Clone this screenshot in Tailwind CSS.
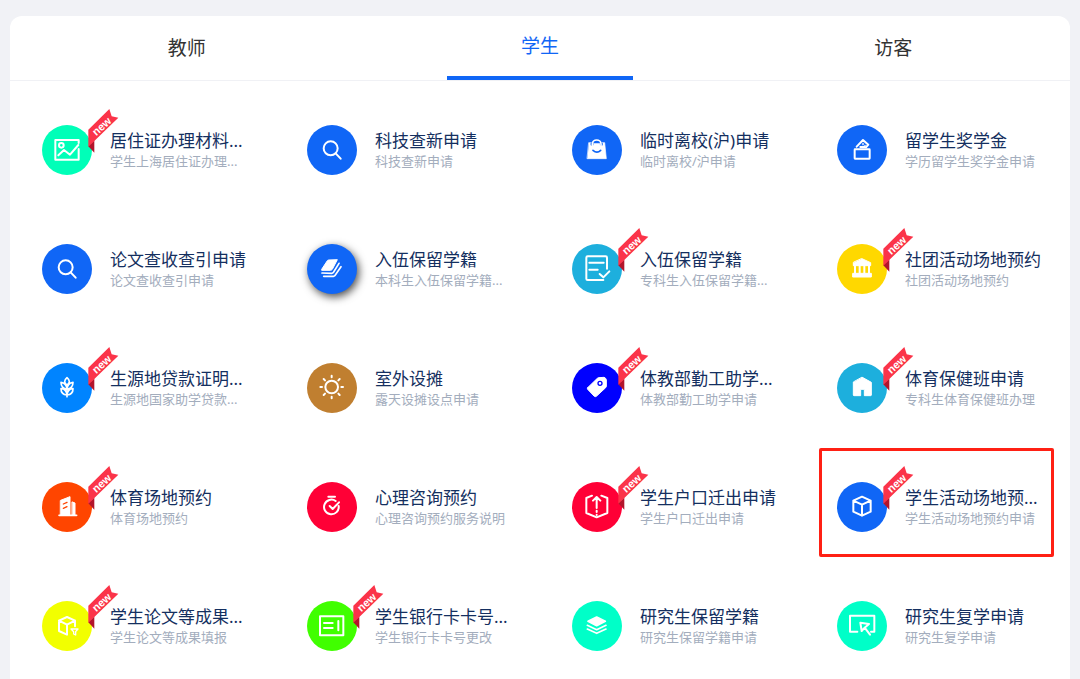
<!DOCTYPE html>
<html lang="zh-CN">
<head>
    <meta charset="UTF-8">
    <meta name="viewport" content="width=device-width, initial-scale=1.0">
    <title>网上办事大厅</title>
    <!-- Tailwind CSS -->
    <script src="https://cdn.jsdelivr.net/npm/@tailwindcss/browser@4"></script>
</head>
<body class="bg-[#f1f2f6] h-screen overflow-hidden pt-4 font-['Noto_Sans','Noto_Sans_CJK_SC',sans-serif]">
    <!-- Icons, drawn on the same 150 unit disc -->
    <svg class="hidden">
        <defs>
            <symbol id="i-image" viewBox="0 0 150 150">
                <path d="M110 54V45H40V104H110V72M49 91L66 75L84 89L109 60"/>
                <circle cx="58" cy="61" r="7"/>
            </symbol>
            <symbol id="i-search" viewBox="0 0 150 150">
                <circle cx="71" cy="70" r="21"/>
                <path d="M86 85L101 101"/>
            </symbol>
            <symbol id="i-bag" viewBox="0 0 150 150">
                <path d="M51 53H98L103 101H46Z" fill="#fff" stroke-width="2"/>
                <path d="M60 58V56M88 58V56" stroke="#1066f6" stroke-width="9"/>
                <path d="M64 55A10 9 0 0 1 84 55Z" fill="#1066f6" stroke="none"/>
                <path d="M61 62V57A13 12 0 0 1 87 57V62" stroke-width="5"/>
                <path d="M63 76Q75 87 86 76" stroke="#1066f6" stroke-width="5"/>
            </symbol>
            <symbol id="i-donate" viewBox="0 0 150 150">
                <rect x="53" y="73" width="45" height="28" rx="1"/>
                <path d="M59 65L78 45L94 59L87 67M70 66H83"/>
                <path d="M78 55v4M84 61v2" stroke-width="4"/>
            </symbol>
            <symbol id="i-books" viewBox="0 0 150 150">
                <path d="M44 76L61 50Q62 48 65 48L91 47L76 76Q74 79 70 79L45 79Z" fill="#fff" stroke-width="3"/>
                <path d="M45 87L75 88Q78 87 80 84L96 58M50 97L80 97Q83 96 85 93L102 68" stroke-width="5"/>
            </symbol>
            <symbol id="i-form" viewBox="0 0 150 150">
                <path d="M105 74V41Q105 37 101 37H47Q43 37 43 41V104Q43 108 47 108H94M52 56H95M52 77H77M83 90L94 100L112 82"/>
            </symbol>
            <symbol id="i-bank" viewBox="0 0 150 150">
                <path d="M75 44L101 56V65H49V56Z" fill="#fff" stroke-width="3"/>
                <path d="M54 65V90M68 65V90M82 65V90M96 65V90" stroke-width="6"/>
                <rect x="48" y="88" width="55" height="11" fill="#fff" stroke-width="3"/>
            </symbol>
            <symbol id="i-wheat" viewBox="0 0 150 150">
                <path d="M75 44Q61 56 75 66Q89 56 75 44ZM75 66V101M75 79Q57 76 57 58Q73 59 75 79ZM75 79Q93 76 93 58Q77 59 75 79ZM75 96Q57 94 57 77Q73 77 75 96ZM75 96Q93 94 93 77Q77 77 75 96Z" stroke-width="5"/>
            </symbol>
            <symbol id="i-sun" viewBox="0 0 150 150">
                <circle cx="74" cy="72" r="19"/>
                <path d="M74 38V43M74 101V106M40 72H45M103 72H108M50 48L54 52M98 48L94 52M50 96L54 92M98 96L94 92"/>
            </symbol>
            <symbol id="i-tag" viewBox="0 0 150 150">
                <path d="M47 74L76 46Q78 44 81 44L96 43Q102 45 103 50V69Q103 72 101 74L73 100Q70 102 67 100L47 79Q45 76 47 74Z" fill="#fff" stroke-width="3"/>
                <circle cx="84" cy="61" r="6" stroke="#00f" stroke-width="4"/>
            </symbol>
            <symbol id="i-home" viewBox="0 0 150 150">
                <path d="M76 43L103 58V96Q103 98 101 98H82V79H71V98H51Q49 98 49 96V58Z" fill="#fff" stroke-width="3"/>
            </symbol>
            <symbol id="i-building" viewBox="0 0 150 150">
                <path d="M56 55L84 44V99H56Z" fill="#fff" stroke-width="3"/>
                <path d="M91 60L99 63V99H91Z" fill="#fff" stroke-width="3"/>
                <path d="M51 100H104" stroke-width="5"/>
                <path d="M64 66L75 61M64 79L75 74" stroke="#ff4500" stroke-width="4"/>
            </symbol>
            <symbol id="i-timer" viewBox="0 0 150 150">
                <path d="M64 44H84M86 57A22 22 0 1 0 95 72M68 72L77 81L96 61"/>
            </symbol>
            <symbol id="i-export" viewBox="0 0 150 150">
                <path d="M60 41L43 48V93L74 106L106 93V48L88 41M74 78V46M63 56L74 45L85 56M74 86V90M74 98V99"/>
            </symbol>
            <symbol id="i-cube" viewBox="0 0 150 150">
                <path d="M75 44L101 56V89L75 101L49 89V56ZM49 56L75 68L101 56M75 68V101"/>
            </symbol>
            <symbol id="i-cube-filter" viewBox="0 0 150 150">
                <path d="M99 76V59L75 48L51 59V90L75 101V71L51 59M75 71L99 59"/>
                <path d="M87 84H108L101 92V102L95 99V92Z" stroke-width="4"/>
            </symbol>
            <symbol id="i-card" viewBox="0 0 150 150">
                <path d="M39 46H109V103H39ZM51 66H77M51 81H77M94 60V88"/>
            </symbol>
            <symbol id="i-layers" viewBox="0 0 150 150">
                <path d="M74 48L100 61L74 74L48 61Z" fill="#fff" stroke-width="5"/>
                <path d="M46 73L74 86L102 73M46 84L74 97L102 84" stroke-width="5"/>
            </symbol>
            <symbol id="i-cursor" viewBox="0 0 150 150">
                <path d="M61 92H39V44H112V92H102M96 69L70 65L74 90L83 80ZM83 80L99 101"/>
            </symbol>
            <symbol id="i-ribbon" viewBox="0 0 93 132">
                <path d="M1 112L19 94V131Z" fill="#b3152b"/>
                <path d="M1 62L64 0L71 22L91 26L1 113Z" fill="#fb3449"/>
                <text x="41" y="63" transform="rotate(-42 41 52)" text-anchor="middle" font-family="Liberation Sans, sans-serif" font-weight="700" font-size="33" fill="#fff">new</text>
            </symbol>
        </defs>
    </svg>

    <main class="bg-white rounded-t-xl mx-2.5 min-h-full">
        <!-- Role tabs -->
        <nav class="grid grid-cols-3 h-[65px] border-b border-[#f0f1f5] text-[19px] text-[#333]">
            <button type="button" class="h-16">教师</button>
            <button type="button" class="h-16 w-[186px] justify-self-center border-b-4 border-[#1066f6] text-[#1066f6]">学生</button>
            <button type="button" class="h-16">访客</button>
        </nav>

        <!-- Service list -->
        <div id="services" class="grid grid-cols-4 pt-2.5"></div>
    </main>

    <script>
        const services = [
            { name: '居住证办理材料...', desc: '学生上海居住证办理...', icon: 'image', color: 'bg-[#00ffb8]', isNew: true },
            { name: '科技查新申请', desc: '科技查新申请', icon: 'search', color: 'bg-[#1066f6]' },
            { name: '临时离校(沪)申请', desc: '临时离校/沪申请', icon: 'bag', color: 'bg-[#1066f6]' },
            { name: '留学生奖学金', desc: '学历留学生奖学金申请', icon: 'donate', color: 'bg-[#1066f6]' },
            { name: '论文查收查引申请', desc: '论文查收查引申请', icon: 'search', color: 'bg-[#1066f6]' },
            { name: '入伍保留学籍', desc: '本科生入伍保留学籍...', icon: 'books', color: 'bg-[#1066f6] shadow-[2px_3px_8px_rgba(0,0,0,0.7)]' },
            { name: '入伍保留学籍', desc: '专科生入伍保留学籍...', icon: 'form', color: 'bg-[#1dafdd]', isNew: true },
            { name: '社团活动场地预约', desc: '社团活动场地预约', icon: 'bank', color: 'bg-[#ffd800]', isNew: true },
            { name: '生源地贷款证明...', desc: '生源地国家助学贷款...', icon: 'wheat', color: 'bg-[#0084ff]', isNew: true },
            { name: '室外设摊', desc: '露天设摊设点申请', icon: 'sun', color: 'bg-[#c07f30]' },
            { name: '体教部勤工助学...', desc: '体教部勤工助学申请', icon: 'tag', color: 'bg-[#0000ff]', isNew: true },
            { name: '体育保健班申请', desc: '专科生体育保健班办理', icon: 'home', color: 'bg-[#1dafdd]', isNew: true },
            { name: '体育场地预约', desc: '体育场地预约', icon: 'building', color: 'bg-[#ff4500]', isNew: true },
            { name: '心理咨询预约', desc: '心理咨询预约服务说明', icon: 'timer', color: 'bg-[#ff0036]' },
            { name: '学生户口迁出申请', desc: '学生户口迁出申请', icon: 'export', color: 'bg-[#ff0036]', isNew: true },
            { name: '学生活动场地预...', desc: '学生活动场地预约申请', icon: 'cube', color: 'bg-[#1066f6]', isNew: true, marked: true },
            { name: '学生论文等成果...', desc: '学生论文等成果填报', icon: 'cube-filter', color: 'bg-[#f2ff00]', isNew: true },
            { name: '学生银行卡卡号...', desc: '学生银行卡卡号更改', icon: 'card', color: 'bg-[#40ff00]', isNew: true },
            { name: '研究生保留学籍', desc: '研究生保留学籍申请', icon: 'layers', color: 'bg-[#00ffc8]' },
            { name: '研究生复学申请', desc: '研究生复学申请', icon: 'cursor', color: 'bg-[#00ffc8]' }
        ];

        const ribbon = '<svg class="absolute left-[46px] -top-4 w-[31px] h-11"><use href="#i-ribbon"/></svg>';
        const marker = '<span class="absolute left-[14px] right-4 top-0 h-[109px] border-3 border-[#ff2014] rounded-xs"></span>';

        document.getElementById('services').innerHTML = services.map(s => `
            <a href="#" class="relative flex items-center gap-[18px] h-[119px] pl-8 pb-px whitespace-nowrap">
                <span class="relative shrink-0 size-[50px] rounded-full ${s.color}">
                    <svg class="size-full" fill="none" stroke="#fff" stroke-width="6" stroke-linecap="round" stroke-linejoin="round"><use href="#i-${s.icon}"/></svg>
                    ${s.isNew ? ribbon : ''}
                </span>
                <span class="block">
                    <span class="block text-[17px] leading-[22px] text-[#142f60]">${s.name}</span>
                    <span class="block text-[13px] leading-[18px] text-[#a3adbd]">${s.desc}</span>
                </span>
                ${s.marked ? marker : ''}
            </a>`).join('');
    </script>
</body>
</html>
